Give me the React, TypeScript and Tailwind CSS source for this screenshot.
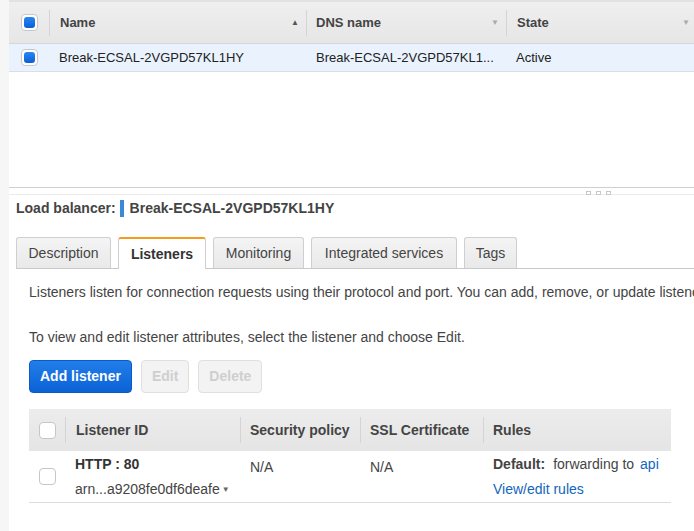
import React from 'react';

const font = { fontFamily: '"Liberation Sans", Arial, sans-serif' };

function BlueCheck() {
  return (
    <div className="w-[17px] h-[17px] rounded-[4px] border border-[#c8c8c8] bg-white p-[2px]">
      <div className="w-full h-full rounded-[3px] bg-gradient-to-b from-[#2a86f0] to-[#0a5fd6]" />
    </div>
  );
}

function EmptyCheck() {
  return <div className="w-[17px] h-[17px] rounded-[4px] border border-[#c6c6c6] bg-white" />;
}

function Sep() {
  return <div className="w-px h-[26px] bg-[#d4d4d4]" />;
}

const tabs = [
  { label: 'Description', w: 'w-[95px]' },
  { label: 'Listeners', w: 'w-[88px]' },
  { label: 'Monitoring', w: 'w-[91px]' },
  { label: 'Integrated services', w: 'w-[146px]' },
  { label: 'Tags', w: 'w-[53px]' },
];

export default function App() {
  return (
    <div className="w-[694px] h-[531px] overflow-hidden bg-white text-[#333] flex" style={font}>
      {/* левая полоса */}
      <div className="w-[9px] shrink-0 bg-[#f6f6f6]" />

      <div className="flex-1 min-w-0 flex flex-col">
        {/* верхняя таблица балансировщиков */}
        <div className="h-[187px] border-t-2 border-[#e2e2e2]">
          <div className="h-[42px] flex items-center bg-gradient-to-b from-[#efefef] to-[#e6e6e6] border-b border-[#d6d6d6] text-[13px] font-bold text-[#444]">
            <div className="w-[40px] flex items-center justify-center">
              <BlueCheck />
            </div>
            <Sep />
            <div className="w-[256px] flex items-center justify-between pl-[10px] pr-[7px]">
              <span>Name</span>
              <span className="text-[8px] text-[#555]">▲</span>
            </div>
            <Sep />
            <div className="w-[199px] flex items-center justify-between pl-[9px] pr-[7px]">
              <span>DNS name</span>
              <span className="text-[8px] text-[#aaa]">▼</span>
            </div>
            <Sep />
            <div className="flex-1 flex items-center justify-between pl-[10px] pr-[4px]">
              <span>State</span>
              <span className="text-[8px] text-[#aaa]">▼</span>
            </div>
          </div>
          <div className="h-[28px] flex items-center bg-[#eaf3fd] border-b border-[#d9dfe6] text-[13px] text-[#222]">
            <div className="w-[40px] flex items-center justify-center">
              <BlueCheck />
            </div>
            <div className="w-[257px] pl-[10px] pt-[1px] whitespace-nowrap">Break-ECSAL-2VGPD57KL1HY</div>
            <div className="w-[200px] pl-[10px] pt-[1px] whitespace-nowrap">Break-ECSAL-2VGPD57KL1...</div>
            <div className="flex-1 pl-[10px] pt-[1px]">Active</div>
          </div>
        </div>

        {/* разделитель с ручкой */}
        <div className="h-[8px] border-t border-[#cfcfcf] border-b border-b-[#ececec] flex items-end justify-start pl-[577px]">
          <div className="flex gap-[5px] mb-[-1px]">
            <div className="w-[5px] h-[4px] border border-[#c8c8c8] bg-white" />
            <div className="w-[5px] h-[4px] border border-[#c8c8c8] bg-white" />
            <div className="w-[5px] h-[4px] border border-[#c8c8c8] bg-white" />
          </div>
        </div>

        {/* детали */}
        <div className="pl-[7px]">
          <div className="h-[26px] flex items-center text-[14px] font-bold text-[#444] whitespace-nowrap">
            <span>Load balancer:</span>
            <span className="w-[4px] h-[17px] bg-[#3b8ad8] ml-[4px] mr-[6px]" />
            <span>Break-ECSAL-2VGPD57KL1HY</span>
          </div>

          <div className="mt-[16px] flex items-end gap-[7px] border-b border-[#c9c9c9] h-[32px]">
            {tabs.map((t) =>
              t.label === 'Listeners' ? (
                <div
                  key={t.label}
                  className={`${t.w} h-[32px] flex items-center justify-center bg-white border-x border-[#cfcfcf] border-t-2 border-t-[#f79b1e] rounded-t-[3px] mb-[-1px] text-[14px] font-bold text-[#333]`}
                >
                  {t.label}
                </div>
              ) : (
                <div
                  key={t.label}
                  className={`${t.w} h-[31px] flex items-center justify-center bg-gradient-to-b from-[#f4f4f4] to-[#e9e9e9] border border-b-0 border-[#cfcfcf] rounded-t-[3px] text-[14px] text-[#444] whitespace-nowrap`}
                >
                  {t.label}
                </div>
              )
            )}
          </div>

          <div className="pl-[13px] text-[14px] text-[#444]">
            <p className="mt-[14px] whitespace-nowrap leading-[18px]">
              Listeners listen for connection requests using their protocol and port. You can add, remove, or update listeners using this tab.
            </p>
            <p className="mt-[27px] whitespace-nowrap leading-[18px]">
              To view and edit listener attributes, select the listener and choose Edit.
            </p>

            <div className="mt-[14px] flex gap-[9px]">
              <button className="h-[33px] px-[10px] rounded-[4px] border border-[#0b5bc4] bg-gradient-to-b from-[#217ee9] to-[#0b62d6] text-white font-bold text-[14px]">
                Add listener
              </button>
              <button className="h-[33px] px-[10px] rounded-[4px] border border-[#e0e0e0] bg-[#f3f3f3] text-[#cfcfcf] font-bold text-[14px]">
                Edit
              </button>
              <button className="h-[33px] px-[10px] rounded-[4px] border border-[#e0e0e0] bg-[#f3f3f3] text-[#cfcfcf] font-bold text-[14px]">
                Delete
              </button>
            </div>

            {/* таблица слушателей */}
            <div className="mt-[16px] w-[642px]">
              <div className="h-[42px] flex items-center bg-gradient-to-b from-[#ececec] to-[#e5e5e5] text-[14px] font-bold text-[#444]">
                <div className="w-[36px] flex justify-center pl-[1px]">
                  <EmptyCheck />
                </div>
                <Sep />
                <div className="w-[174px] pl-[10px]">Listener ID</div>
                <Sep />
                <div className="w-[119px] pl-[9px] whitespace-nowrap">Security policy</div>
                <Sep />
                <div className="w-[122px] pl-[9px] whitespace-nowrap">SSL Certificate</div>
                <Sep />
                <div className="flex-1 pl-[9px]">Rules</div>
              </div>
              <div className="h-[52px] flex border-b border-[#dcdcdc] text-[14px] text-[#444]">
                <div className="w-[36px] flex items-center justify-center pl-[1px]">
                  <EmptyCheck />
                </div>
                <div className="w-[175px] pl-[10px] pt-[4px]">
                  <div className="font-bold text-[#333] leading-[18px]">HTTP : 80</div>
                  <div className="mt-[7px] leading-[18px] text-[#444] whitespace-nowrap">
                    arn...a9208fe0df6deafe<span className="text-[8px] text-[#666] ml-[2px] align-middle">▼</span>
                  </div>
                </div>
                <div className="w-[120px] pl-[10px] pt-[6px]">N/A</div>
                <div className="w-[123px] pl-[10px] pt-[6px]">N/A</div>
                <div className="flex-1 pl-[10px] pt-[4px] whitespace-nowrap">
                  <div className="leading-[18px]">
                    <span className="font-bold text-[#444]">Default:</span>
                    <span className="ml-[8px]">forwarding to</span>
                    <span className="ml-[6px] text-[#1166bb]">api</span>
                  </div>
                  <div className="mt-[7px] leading-[18px] text-[#1166bb]">View/edit rules</div>
                </div>
              </div>
            </div>
          </div>
        </div>
      </div>
    </div>
  );
}
